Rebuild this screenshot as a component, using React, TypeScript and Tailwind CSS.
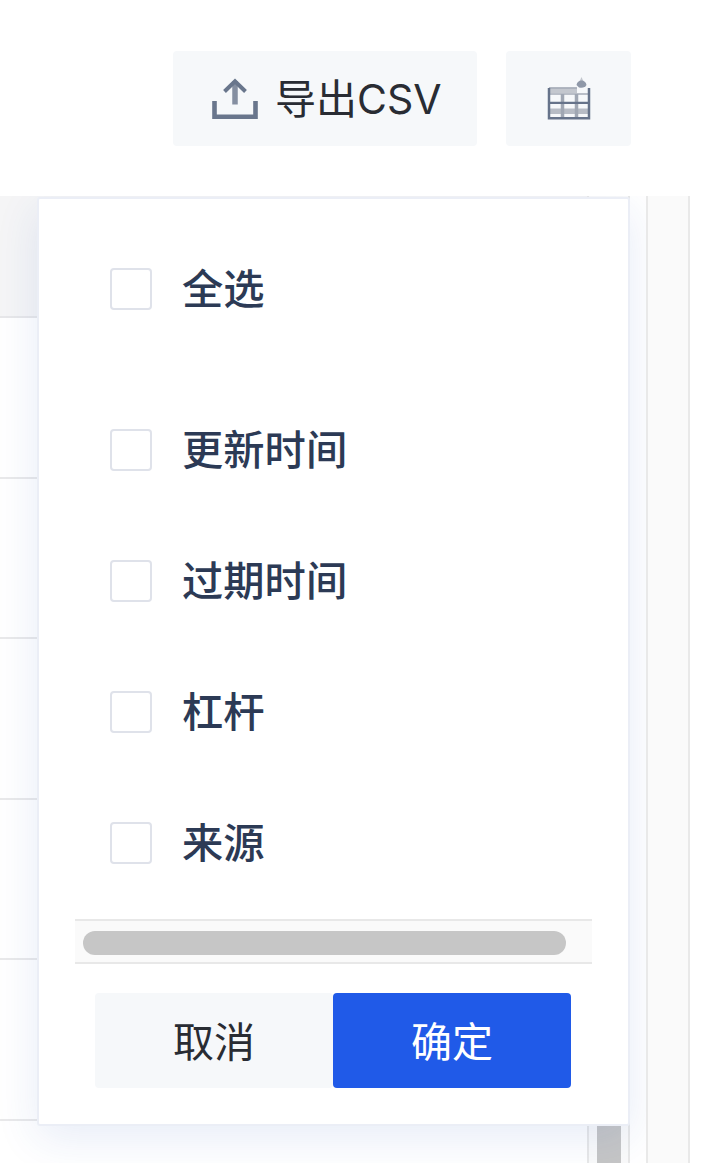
import { useState } from 'react'

const columns = ['更新时间', '过期时间', '杠杆', '来源']

const rows = [1, 2, 3, 4, 5]

function ExportIcon() {
  return (
    <svg className="h-[42px] w-[48px] flex-shrink-0" viewBox="0 0 48 42" fill="none" stroke="#69768c">
      <path d="M3.5 23V38.7H44.5V23" strokeWidth="4.6" />
      <path d="M24 26.5V3" strokeWidth="5.5" stroke="#858fa1" />
      <path d="M13.5 13.5L24 3.2L34.5 13.5" strokeWidth="4" />
    </svg>
  )
}

function TableIcon() {
  return (
    <svg className="h-[44px] w-[44px]" viewBox="0 0 44 44" fill="none">
      <path d="M2 10.5H30V16.5H2Z" fill="#c3c7ce" />
      <path d="M2 31.5H42V37H2Z" fill="#b7bcc5" />
      <path d="M2 11H30" stroke="#a3aab6" strokeWidth="1.5" />
      <path d="M2 17H42" stroke="#b9bec7" strokeWidth="2" />
      <path d="M15.5 17V41M29.5 17V41" stroke="#a0a7b3" strokeWidth="3.5" />
      <path d="M2 25.8H42" stroke="#66738a" strokeWidth="2.2" />
      <path d="M2 11V41.3H42V11" stroke="#66738a" strokeWidth="2.5" />
      <path d="M31 8L34.5 0L38 8Z" fill="#c3c7ce" />
      <path d="M29.5 8C30 5 32 3.5 34.5 3.5C37 3.5 39 5 39.5 8C38 10.5 36 11 32 10.5Z" fill="#8f98a8" />
    </svg>
  )
}

function Option({ label, checked, onToggle }: { label: string; checked: boolean; onToggle: () => void }) {
  return (
    <label className="flex h-[61px] cursor-pointer items-center gap-[30px] text-[41.3px] font-medium leading-none text-[#2c3a55]">
      <input
        type="checkbox"
        checked={checked}
        onChange={onToggle}
        className="h-[42px] w-[42px] flex-shrink-0 appearance-none rounded-[4px] border-2 border-[#dfe2ea] bg-white checked:bg-[#205ae8]"
      />
      <span className="pt-[3px]">{label}</span>
    </label>
  )
}

export default function App() {
  const [selected, setSelected] = useState<string[]>([])
  const allSelected = selected.length === columns.length

  const toggle = (name: string) => {
    setSelected(selected.includes(name) ? selected.filter((s) => s !== name) : [...selected, name])
  }

  return (
    <main className="flex h-[1163px] w-[720px] flex-col overflow-hidden bg-white font-['Inter','Noto_Sans_CJK_SC',sans-serif]">
      {/* Toolbar */}
      <div className="flex h-[196px] flex-shrink-0 items-start justify-end gap-[29px] pr-[89px] pt-[51px]">
        <button className="flex h-[95px] w-[304px] items-center gap-[16px] rounded-[4px] bg-[#f6f8fa] pl-[38px] text-[41px] leading-none text-[#292c33]">
          <ExportIcon />
          <span className="whitespace-nowrap pt-px">导出CSV</span>
        </button>
        <button className="flex h-[95px] w-[125px] items-center justify-center rounded-[4px] bg-[#f6f8fa]">
          <TableIcon />
        </button>
      </div>

      <div className="flex min-h-0 flex-1">
        {/* Table with the column picker on top */}
        <div className="relative w-[646px] overflow-hidden">
          <div className="flex h-full">
            <div className="w-[587px]">
              <div className="h-[122px] border-b-2 border-[#e7e7e9] bg-[#f5f5f6]" />
              {rows.map((row) => (
                <div key={row} className="h-[160.6px] border-b-2 border-[#e9e9ea]" />
              ))}
            </div>
            <div className="flex w-[43px] justify-center border-x-2 border-[#e8e8e8] bg-[#fafafa] pl-px pt-[12px]">
              <div className="h-full w-6 bg-[#c6c6c6]" />
            </div>
          </div>

          <div className="absolute left-[37px] top-[1px] flex h-[929px] w-[593px] flex-col rounded-[3px] border-2 border-[#ebeef6] bg-white px-[36px] shadow-[0_12px_44px_rgba(32,80,180,0.11)]">
            <div className="pl-[35px] pt-[59px]">
              <Option
                label="全选"
                checked={allSelected}
                onToggle={() => setSelected(allSelected ? [] : columns)}
              />
            </div>
            <div className="mt-[100px] flex flex-col gap-[70px] pl-[35px]">
              {columns.map((name) => (
                <Option key={name} label={name} checked={selected.includes(name)} onToggle={() => toggle(name)} />
              ))}
            </div>

            <div className="mt-[46px] h-[45px] flex-shrink-0 border-y-2 border-[#e8e8e8] bg-[#fafafa] pl-[8px] pt-[10px]">
              <div className="h-6 w-[483px] rounded-full bg-[#c6c6c6]" />
            </div>

            <div className="mt-[29px] flex h-[95px] flex-shrink-0 pl-[20px] text-[41px] leading-none">
              <button className="w-[238px] rounded-[4px] bg-[#f6f8fa] pt-[3px] text-[#292c33]">取消</button>
              <button className="w-[238px] rounded-[4px] bg-[#205ae8] pt-[3px] text-white">确定</button>
            </div>
          </div>
        </div>

        {/* Page scrollbar track */}
        <div className="w-[44px] border-x-2 border-[#e9e9e9] bg-[#fafafa]" />
      </div>
    </main>
  )
}
